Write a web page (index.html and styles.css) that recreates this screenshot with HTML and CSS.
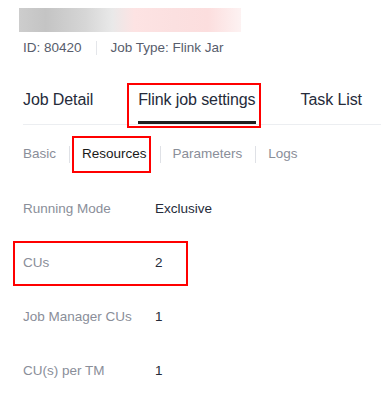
FILE: index.html
```html
<!DOCTYPE html>
<html lang="en">
<head>
    <meta charset="UTF-8">
    <meta name="viewport" content="width=device-width, initial-scale=1.0">
    <title>Flink job settings</title>
    <link rel="stylesheet" href="styles.css">
</head>
<body>

    <!-- Job name (blurred) -->
    <div class="job-name"></div>

    <!-- Job meta -->
    <div class="meta">
        <span>ID: 80420</span>
        <span class="meta-sep"></span>
        <span>Job Type: Flink Jar</span>
    </div>

    <!-- Main tabs -->
    <div class="tabs">
        <div class="tab">Job Detail</div>
        <div class="tab active marked">Flink job settings</div>
        <div class="tab">Task List</div>
    </div>

    <!-- Sub tabs -->
    <div class="subtabs">
        <div class="subtab">Basic</div>
        <div class="subtab active marked">Resources</div>
        <div class="subtab">Parameters</div>
        <div class="subtab">Logs</div>
    </div>

    <!-- Resource fields -->
    <div class="fields">
        <div class="row">
            <div class="label">Running Mode</div>
            <div class="value">Exclusive</div>
        </div>
        <div class="row marked">
            <div class="label">CUs</div>
            <div class="value">2</div>
        </div>
        <div class="row">
            <div class="label">Job Manager CUs</div>
            <div class="value">1</div>
        </div>
        <div class="row">
            <div class="label">CU(s) per TM</div>
            <div class="value">1</div>
        </div>
    </div>

</body>
</html>
```

FILE: styles.css
```css
body {
    font-family: "Liberation Sans", Arial, sans-serif;
    font-size: 13.5px;
    background-color: white;
    color: #252b3a;
    margin: 0;
    padding: 8px 0 0 23px;
}
.job-name {
    width: 222px;
    height: 24px;
    margin-left: -4px;
    background: linear-gradient(90deg, #cdcdcd 0%, #c4c4c4 12%, #d6d6d6 30%, #e9e9e9 42%, #fde3e3 52%, #fbe0e0 70%, #fcdede 85%, #fdf2f2 100%);
}
.meta {
    display: flex;
    align-items: center;
    margin-top: 6px;
    line-height: 20px;
    color: #575d6c;
}
.meta-sep {
    width: 1px;
    height: 14px;
    background-color: #e4e6ea;
    margin: 0 14px 0 14px;
}
.tabs {
    display: flex;
    gap: 45px;
    margin-top: 30px;
    border-bottom: 1px solid #eceef1;
}
.tab {
    position: relative;
    font-size: 16px;
    letter-spacing: -0.1px;
    line-height: 24px;
    padding-bottom: 9px;
    border-bottom: 3px solid transparent;
    color: #252b3a;
}
.tab.active {
    border-bottom-color: #1f1f1f;
}
.tab.marked::after {
    content: "";
    position: absolute;
    top: -5px;
    bottom: -7px;
    left: -11px;
    right: -5px;
    border: 2px solid #f00;
}
.subtabs {
    display: flex;
    align-items: center;
    margin-top: 19px;
}
.subtab {
    position: relative;
    line-height: 20px;
    padding: 0 13px;
    color: #8a8e99;
}
.subtab:first-child {
    padding-left: 0;
}
.subtab + .subtab::before {
    content: "";
    position: absolute;
    left: 0;
    top: 2px;
    width: 1px;
    height: 17px;
    background-color: #dfe1e6;
}
.subtab.active {
    color: #191919;
}
.subtab.marked::after {
    content: "";
    position: absolute;
    top: -8px;
    bottom: -9px;
    left: 3px;
    right: 9px;
    border: 2px solid #f00;
}
.fields {
    margin-top: 18px;
}
.row {
    position: relative;
    display: flex;
    line-height: 20px;
    padding: 17px 0;
}
.row.marked::after {
    content: "";
    position: absolute;
    top: 5px;
    left: -10px;
    width: 175px;
    height: 45px;
    box-sizing: border-box;
    border: 2px solid #f00;
}
.label {
    width: 132px;
    color: #8a8e99;
}
.value {
    color: #252b3a;
}
```
